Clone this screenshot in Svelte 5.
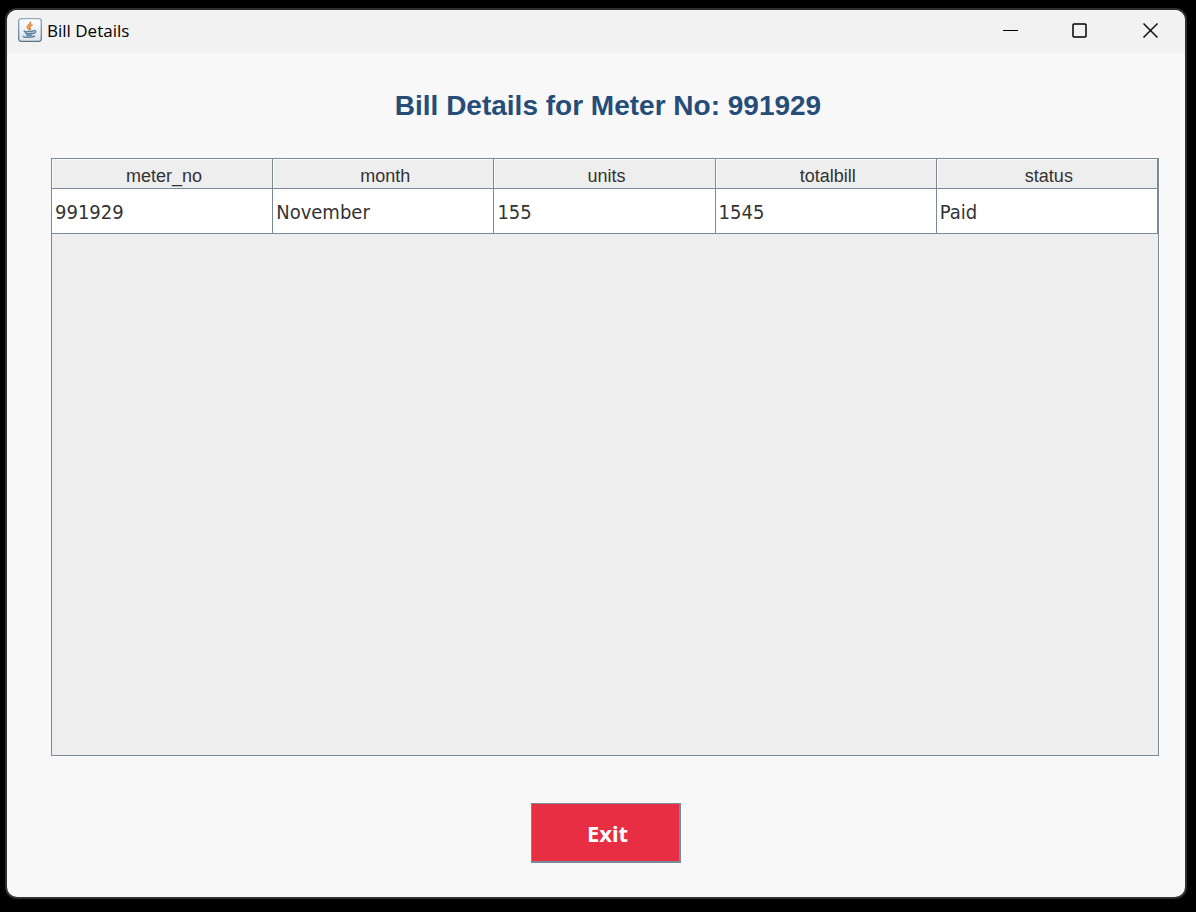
<script>
  const meterNo = '991929';
  const columns = ['meter_no', 'month', 'units', 'totalbill', 'status'];
  const rows = [['991929', 'November', '155', '1545', 'Paid']];
</script>

<div class="desktop">
  <div class="window">
    <header class="titlebar">
      <svg class="app-icon" width="24" height="24" viewBox="0 0 24 24" aria-hidden="true">
        <defs>
          <linearGradient id="tile" x1="0" y1="0" x2="0" y2="1">
            <stop offset="0" stop-color="#ffffff" />
            <stop offset="1" stop-color="#dde4ea" />
          </linearGradient>
          <linearGradient id="edge" x1="0" y1="0" x2="0" y2="1">
            <stop offset="0" stop-color="#8fa9be" />
            <stop offset="1" stop-color="#5b7288" />
          </linearGradient>
        </defs>
        <rect x="0.7" y="0.7" width="22.6" height="22.6" rx="2.5" fill="url(#tile)" stroke="url(#edge)" stroke-width="1.3" />
        <path d="M12.4 4.2c.8 2.2-3.6 3-3.1 5 .2 1 1.1 1.500 1.700 2.300M13.900 7c-1.600.6-2.700 1.500-2.200 2.500.3.7.8 1 .2 2" fill="none" stroke="#e8883c" stroke-width="1.7" stroke-linecap="round" />
        <path d="M6.3 13c-.7.9 3 .9 9.3.1M7.6 15.1c1.8.7 5.1.6 7-.1M8.500 17c1.500.5 3.900.5 5.400-.1M15.600 12.600c2.500-.7 3 1.800.1 2.900M5.400 18.200c-.6 1.300 8 1.600 11.200.1" fill="none" stroke="#5d86a5" stroke-width="1.5" stroke-linecap="round" />
      </svg>
      <span class="caption">Bill Details</span>
      <button class="control" aria-label="Minimize">
        <svg width="16" height="16" viewBox="0 0 16 16"><path d="M1 7.5h15" stroke="#000" /></svg>
      </button>
      <button class="control" aria-label="Maximize">
        <svg width="16" height="16" viewBox="0 0 16 16"><rect x="1" y="1" width="13" height="13" rx="1" fill="none" stroke="#000" stroke-width="1.5" /></svg>
      </button>
      <button class="control" aria-label="Close">
        <svg width="16" height="16" viewBox="0 0 16 16"><path d="M1.5 0.5l14 14M15.5 0.5l-14 14" stroke="#111" stroke-width="1.5" /></svg>
      </button>
    </header>

    <main>
      <h1>Bill Details for Meter No: {meterNo}</h1>
      <div class="scroll-pane">
        <table>
          <thead>
            <tr>{#each columns as column}<th scope="col">{column}</th>{/each}</tr>
          </thead>
          <tbody>
            {#each rows as row}
              <tr>{#each row as value}<td>{value}</td>{/each}</tr>
            {/each}
          </tbody>
        </table>
      </div>
      <button class="exit">Exit</button>
    </main>
  </div>
</div>

<style>
  :global(body) {
    margin: 0;
    background: #000;
  }
  .desktop {
    box-sizing: border-box;
    display: flex;
    min-height: 100vh;
    padding: 8px 9px 13px 5px;
  }
  .window {
    flex: 1;
    display: flex;
    flex-direction: column;
    overflow: hidden;
    border: 2px solid #303030;
    border-radius: 12px;
    background: #f8f8f8;
  }
  .titlebar {
    display: flex;
    align-items: center;
    box-sizing: border-box;
    height: 43px;
    padding: 0 0 2px 11px;
    background: #f2f2f2;
  }
  .app-icon {
    margin-bottom: 2px;
  }
  .caption {
    flex: 1;
    padding-left: 5px;
    font: 17px/24px "Open Sans", "Noto Sans", sans-serif;
    color: #000;
  }
  .control {
    display: flex;
    align-items: center;
    justify-content: center;
    width: 70px;
    height: 41px;
    padding: 0;
    border: 0;
    background: transparent;
  }
  main {
    flex: 1;
    display: flex;
    flex-direction: column;
    padding: 37px 26px 34px 44px;
  }
  h1 {
    margin: 0 0 36px;
    padding-left: 6px;
    font: bold 28px/32px "Liberation Sans", Arial, sans-serif;
    text-align: center;
    color: #264d78;
  }
  .scroll-pane {
    flex: 1;
    border: 1px solid #7a8a99;
    background: #eee;
    box-shadow: 1px 1px #fff;
  }
  table {
    width: 100%;
    table-layout: fixed;
    border-collapse: separate;
    border-spacing: 0;
    color: #333;
  }
  th,
  td {
    box-sizing: border-box;
    border-right: 1px solid #7a8a99;
    border-bottom: 1px solid #7a8a99;
  }
  th {
    height: 30px;
    padding: 4px 0 0 4px;
    font: 18px/24px "Liberation Sans", Arial, sans-serif;
    text-align: center;
    background: #eee;
    box-shadow: inset 1px 1px #fff;
  }
  td {
    height: 45px;
    padding: 2px 3px 0;
    font: 20px/28px "DejaVu Sans Condensed", Tahoma, sans-serif;
    background: #fff;
  }
  .exit {
    align-self: center;
    width: 150px;
    height: 60px;
    margin: 47px 0 0 2px;
    padding: 0 0 0 4px;
    border: 1px solid #7a8a99;
    border-right-width: 2px;
    border-bottom-width: 2px;
    font: bold 22px/28px "Noto Sans", Tahoma, sans-serif;
    color: #fff;
    background: #e82e42;
  }
</style>
